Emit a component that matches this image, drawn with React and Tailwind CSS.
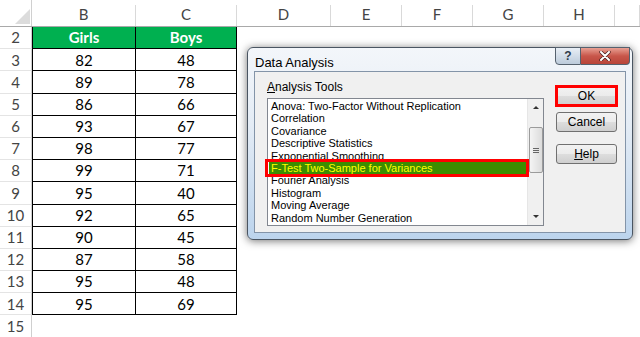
import React from 'react'

const cols = [
  { name: '', w: 'w-[32px]' },
  { name: 'B', w: 'w-[104px]' },
  { name: 'C', w: 'w-[101px]' },
  { name: 'D', w: 'w-[94px]' },
  { name: 'E', w: 'w-[71px]' },
  { name: 'F', w: 'w-[71px]' },
  { name: 'G', w: 'w-[71px]' },
  { name: 'H', w: 'w-[71px]' },
  { name: '', w: 'w-[25px]' },
]

const data = [
  [82, 48],
  [89, 78],
  [86, 66],
  [93, 67],
  [98, 77],
  [99, 71],
  [95, 40],
  [92, 65],
  [90, 45],
  [87, 58],
  [95, 48],
  [95, 69],
]

const tools = [
  'Anova: Two-Factor Without Replication',
  'Correlation',
  'Covariance',
  'Descriptive Statistics',
  'Exponential Smoothing',
  'F-Test Two-Sample for Variances',
  'Fourier Analysis',
  'Histogram',
  'Moving Average',
  'Random Number Generation',
]

function HeaderRow() {
  return (
    <div className="flex h-[27px] border-b border-[#a9a9a9]">
      <div className="relative w-[32px] h-full border-r border-[#d0d0d0]">
        <div className="absolute left-[15px] top-[9px] w-0 h-0 border-l-[15px] border-l-transparent border-b-[15px] border-b-[#dcdcdc]" />
      </div>
      {cols.slice(1).map((c, i) => (
        <div key={i} className={`${c.w} h-full flex flex-col justify-end`}>
          <div className="h-[21px] flex items-center justify-center border-r border-[#d9d9d9] text-[15px] text-[#444] leading-none pb-[2px]">
            {c.name}
          </div>
        </div>
      ))}
    </div>
  )
}

function Cell({ children, head, first }) {
  return (
    <div
      className={`h-full flex items-center justify-center border-r border-b border-black ${first ? 'border-l' : ''} ${
        head ? 'bg-[#00b050] text-white font-bold' : 'text-black'
      }`}
    >
      {children}
    </div>
  )
}

function Row({ n, a, b, head }) {
  return (
    <div className="flex h-[22.2px]">
      <div className="w-[32px] h-full flex items-center justify-center border-r border-b border-[#cfcfcf] border-b-[#e4e4e4] text-[15px] text-[#444]">
        {n}
      </div>
      <div className="w-[104px] h-full">
        <Cell head={head} first>
          {a}
        </Cell>
      </div>
      <div className="w-[101px] h-full">
        <Cell head={head}>{b}</Cell>
      </div>
      <div className="flex-1" />
    </div>
  )
}

function WinButton({ children, red }) {
  return (
    <div className="relative h-[20px] w-[61px]">
      <div className="h-full w-full rounded-[3px] border border-[#707070] bg-[linear-gradient(to_bottom,#f2f2f2_0%,#ebebeb_50%,#dddddd_51%,#cfcfcf_100%)] flex items-center justify-center text-[12px] text-black">
        {children}
      </div>
      {red && <div className="absolute -inset-[1px] border-[3px] border-[#ff0000]" />}
    </div>
  )
}

function ListBox() {
  return (
    <div className="mt-[4px] flex w-[277px] h-[128px] border border-[#828790] bg-white">
      <div className="flex-1 pt-[1px] pl-[1px] pr-[1px]">
        {tools.map((t, i) =>
          i === 5 ? (
            <div key={t} className="relative h-[12.4px] leading-[12.4px] bg-[#3c8d00] text-[#ffff00] pl-[2px] whitespace-nowrap">
              {t}
              <div className="absolute left-[-4px] right-[-3px] top-[-3px] bottom-[-3px] border-[3px] border-[#ff0000]" />
            </div>
          ) : (
            <div key={t} className="h-[12.4px] leading-[12.4px] pl-[2px] whitespace-nowrap overflow-hidden">
              {t}
            </div>
          )
        )}
      </div>
      <div className="w-[16px] h-full bg-[#f0f0f0] border-l border-[#e6e6e6] flex flex-col items-center">
        <div className="h-[17px] flex items-center justify-center">
          <div className="w-0 h-0 border-l-[3px] border-r-[3px] border-b-[3px] border-l-transparent border-r-transparent border-b-[#333]" />
        </div>
        <div className="mt-[11px] w-[14px] h-[46px] rounded-[2px] border border-[#9b9b9b] bg-[linear-gradient(to_right,#f4f4f4,#dcdcdc)] flex flex-col items-center justify-center gap-[1px]">
          <div className="w-[6px] h-[1px] bg-[#666]" />
          <div className="w-[6px] h-[1px] bg-[#666]" />
          <div className="w-[6px] h-[1px] bg-[#666]" />
        </div>
        <div className="flex-1" />
        <div className="h-[17px] flex items-center justify-center">
          <div className="w-0 h-0 border-l-[3px] border-r-[3px] border-t-[3px] border-l-transparent border-r-transparent border-t-[#333]" />
        </div>
      </div>
    </div>
  )
}

function Dialog() {
  return (
    <div className="absolute left-[247px] top-[47px] w-[386px] h-[193px] rounded-[6px] border border-[#4a5562] bg-[linear-gradient(to_bottom,#f3f6fa_0%,#e4ecf5_40%,#bcd4ed_100%)] shadow-[0_1px_8px_rgba(0,0,0,0.55)] font-['Liberation_Sans',sans-serif] text-[11px]">
      <div className="relative h-[22px]">
        <div className="absolute left-[7px] top-[8px] text-[13px] text-black leading-none">Data Analysis</div>
        <div className="absolute right-[2px] top-[-1px] flex">
          <div className="w-[26px] h-[18px] border border-[#55616e] rounded-bl-[4px] bg-[linear-gradient(to_bottom,#e8eef5,#bccbdb)] flex items-center justify-center text-[12px] font-bold text-[#2e3b4b] leading-none">
            ?
          </div>
          <div className="w-[49px] h-[18px] border border-l-0 border-[#55616e] rounded-br-[4px] bg-[linear-gradient(to_bottom,#e8a093,#c8564a_50%,#b8453a)] flex items-center justify-center">
            <svg width="12" height="10" viewBox="0 0 12 10">
              <path d="M2 1 L10 9 M10 1 L2 9" stroke="#4a2020" strokeWidth="3.4" strokeLinecap="round" />
              <path d="M2 1 L10 9 M10 1 L2 9" stroke="#fff" strokeWidth="2" strokeLinecap="round" />
            </svg>
          </div>
        </div>
      </div>
      <div className="absolute left-[6px] right-[6px] top-[23px] bottom-[6px] border border-[#8394a8] bg-[#f0f0f0] flex">
        <div className="pl-[12px] pt-[9px]">
          <div className="leading-[13px] text-[12px] text-black">
            <span className="underline">A</span>nalysis Tools
          </div>
          <ListBox />
        </div>
        <div className="ml-[12px] pt-[14px] flex flex-col">
          <WinButton red>OK</WinButton>
          <div className="h-[6px]" />
          <WinButton>Cancel</WinButton>
          <div className="h-[12px]" />
          <WinButton>
            <span>
              <span className="underline">H</span>elp
            </span>
          </WinButton>
        </div>
      </div>
    </div>
  )
}

export default function App() {
  return (
    <div className="relative w-[640px] h-[337px] overflow-hidden bg-white font-['Lato',sans-serif] text-[15px]">
      <HeaderRow />
      <Row n={2} a="Girls" b="Boys" head />
      {data.map((r, i) => (
        <Row key={i} n={i + 3} a={r[0]} b={r[1]} />
      ))}
      <div className="flex h-[22.2px]">
        <div className="w-[32px] h-full flex items-center justify-center border-r border-[#cfcfcf] text-[15px] text-[#444]">
          15
        </div>
      </div>
      <Dialog />
    </div>
  )
}
